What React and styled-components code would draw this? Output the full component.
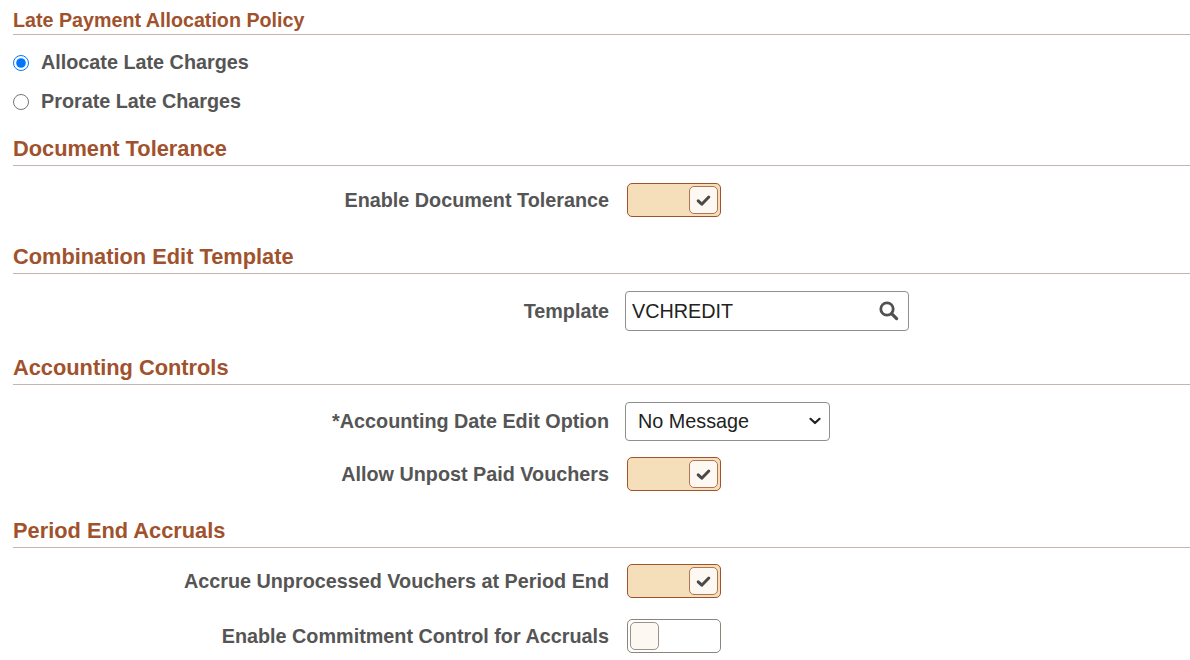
import React from "react";
import styled, { createGlobalStyle } from "styled-components";

const GlobalStyle = createGlobalStyle`
	body {
		margin: 0;
		background: #ffffff;
		font-family: "Liberation Sans", Arial, sans-serif;
	}
`;

const App = () => {
	return (
		<Page>
			<GlobalStyle />
			<SmallHeader>Late Payment Allocation Policy</SmallHeader>
			<RadioGroup>
				<RadioRow>
					<Radio type='radio' name='late' defaultChecked />
					<RadioText>Allocate Late Charges</RadioText>
				</RadioRow>
				<RadioRow>
					<Radio type='radio' name='late' />
					<RadioText>Prorate Late Charges</RadioText>
				</RadioRow>
			</RadioGroup>

			<Header $top={15}>Document Tolerance</Header>
			<Body $top={12}>
				<Row>
					<Label>Enable Document Tolerance</Label>
					<Toggle on />
				</Row>
			</Body>

			<Header $top={22}>Combination Edit Template</Header>
			<Body $top={15}>
				<Row>
					<Label>Template</Label>
					<SearchBox>
						<span>VCHREDIT</span>
						<SearchIcon />
					</SearchBox>
				</Row>
			</Body>

			<Header $top={22}>Accounting Controls</Header>
			<Body $top={14} $gap={9}>
				<Row>
					<Label>*Accounting Date Edit Option</Label>
					<SelectBox>
						<span>No Message</span>
						<Chevron />
					</SelectBox>
				</Row>
				<Row>
					<Label>Allow Unpost Paid Vouchers</Label>
					<Toggle on />
				</Row>
			</Body>

			<Header $top={22}>Period End Accruals</Header>
			<Body $top={11} $gap={11}>
				<Row>
					<Label>Accrue Unprocessed Vouchers at Period End</Label>
					<Toggle on />
				</Row>
				<Row>
					<Label>Enable Commitment Control for Accruals</Label>
					<Toggle />
				</Row>
			</Body>
		</Page>
	);
};

export default App;

const Toggle = ({ on }) => (
	<Track $on={on}>
		<Knob $on={on}>
			{on ? (
				<svg width='15' height='13' viewBox='0 0 15 13'>
					<path
						d='M2.2 6.8 L5.8 10.2 L12.8 3'
						fill='none'
						stroke='#4a4a4a'
						strokeWidth='3'
						strokeLinecap='round'
						strokeLinejoin='round'
					/>
				</svg>
			) : null}
		</Knob>
	</Track>
);

const SearchIcon = () => (
	<svg width='22' height='22' viewBox='0 0 22 22'>
		<circle cx='9' cy='9' r='6.2' fill='none' stroke='#505050' strokeWidth='2.8' />
		<path d='M13.8 13.8 L18.6 18.6' stroke='#505050' strokeWidth='3.2' strokeLinecap='round' />
	</svg>
);

const Chevron = () => (
	<svg width='12' height='8' viewBox='0 0 12 8'>
		<path
			d='M1.5 1.8 L6 6 L10.5 1.8'
			fill='none'
			stroke='#222'
			strokeWidth='2.2'
			strokeLinecap='round'
			strokeLinejoin='round'
		/>
	</svg>
);

const Page = styled.div`
	width: 1190px;
	height: 660px;
	padding-left: 13px;
	box-sizing: border-box;
	overflow: hidden;
	display: flex;
	flex-direction: column;
`;

const SmallHeader = styled.div`
	margin-top: 8px;
	padding-bottom: 2px;
	font-size: 19.7px;
	line-height: 24px;
	font-weight: 700;
	color: #a0522d;
	border-bottom: 1px solid #c2b7b0;
`;

const Header = styled.div`
	margin-top: ${(p) => p.$top}px;
	padding-bottom: 3px;
	font-size: 21.8px;
	line-height: 26px;
	font-weight: 700;
	color: #a0522d;
	border-bottom: 1px solid #c2b7b0;
`;

const RadioGroup = styled.div`
	margin-top: 8px;
	display: flex;
	flex-direction: column;
`;

const RadioRow = styled.label`
	height: 39px;
	display: flex;
	align-items: center;
	gap: 12px;
	padding-left: 0;
`;

const Radio = styled.input`
	margin: 0;
	width: 16px;
	height: 16px;
	accent-color: #0075ff;
`;

const RadioText = styled.span`
	font-size: 19.8px;
	font-weight: 700;
	color: #555555;
`;

const Body = styled.div`
	margin-top: ${(p) => p.$top}px;
	display: flex;
	flex-direction: column;
	gap: ${(p) => p.$gap || 0}px;
`;

const Row = styled.div`
	height: 44px;
	display: grid;
	grid-template-columns: 596px auto;
	column-gap: 16px;
	align-items: center;
	justify-items: start;
`;

const Label = styled.div`
	justify-self: end;
	font-size: 19.8px;
	font-weight: 700;
	color: #555555;
	white-space: nowrap;
`;

const Track = styled.div`
	margin-left: 2px;
	width: 94px;
	height: 34px;
	box-sizing: border-box;
	border-radius: 5px;
	border: 1px solid ${(p) => (p.$on ? "#a0522d" : "#8c837c")};
	background: ${(p) => (p.$on ? "#f5deba" : "#ffffff")};
	display: flex;
	align-items: center;
	justify-content: ${(p) => (p.$on ? "flex-end" : "flex-start")};
	padding: 0 2px;
`;

const Knob = styled.div`
	width: 29px;
	height: 28px;
	box-sizing: border-box;
	border-radius: 5px;
	border: 1px solid ${(p) => (p.$on ? "#b17553" : "#9a918a")};
	background: #fdf8f2;
	display: flex;
	align-items: center;
	justify-content: center;
`;

const SearchBox = styled.div`
	width: 284px;
	height: 40px;
	box-sizing: border-box;
	border: 1px solid #8f8f8f;
	border-radius: 4px;
	padding: 0 8px 0 6px;
	display: flex;
	align-items: center;
	justify-content: space-between;
	font-size: 19.8px;
	color: #222222;
`;

const SelectBox = styled.div`
	width: 205px;
	height: 39px;
	box-sizing: border-box;
	border: 1px solid #8f8f8f;
	border-radius: 4px;
	padding: 0 8px 0 12px;
	display: flex;
	align-items: center;
	justify-content: space-between;
	font-size: 19.8px;
	color: #222222;
`;
